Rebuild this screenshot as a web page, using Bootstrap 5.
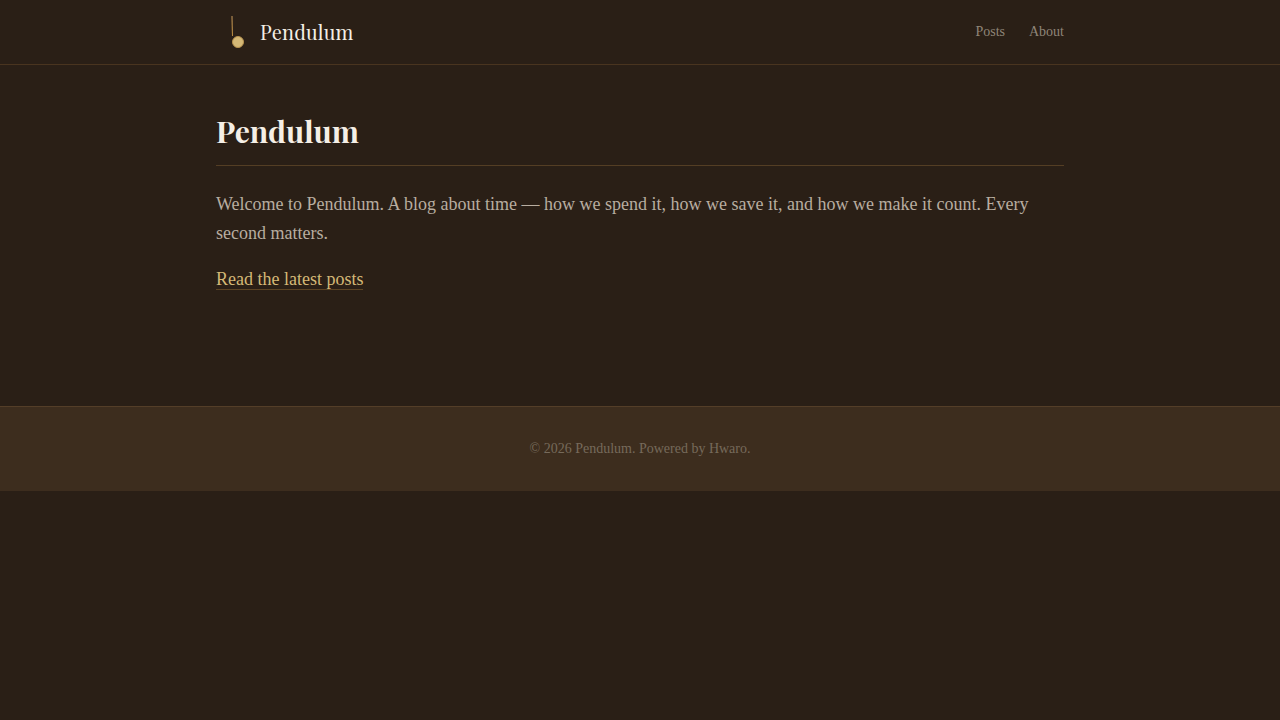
<!DOCTYPE html>
<html lang="en">
<head>
<meta charset="utf-8">
<meta name="viewport" content="width=device-width, initial-scale=1">
<title>Pendulum</title>
<link href="https://cdn.jsdelivr.net/npm/bootstrap@5.3.0/dist/css/bootstrap.min.css" rel="stylesheet">
<style>
  body {
    background: #2a1f16;
    color: #b8ada0;
    font-family: "Liberation Serif", serif;
    font-size: 18px;
    line-height: 29px;
  }
  .page-width { max-width: 880px; }
  .site-header { border-bottom: 1px solid #49341f; }
  .brand-name {
    color: #f5efe6;
    font-family: "Playfair Display", "Liberation Serif", serif;
    font-size: 20px;
    font-weight: 400;
    line-height: 32px;
    letter-spacing: 0.01em;
  }
  .site-nav { font-size: 14px; line-height: 20px; }
  .site-nav a { color: #8f8578; }
  .site-nav a:hover { color: #d4b876; }
  .page-title {
    color: #f5efe6;
    font-family: "Playfair Display", "Liberation Serif", serif;
    font-size: 30px;
    font-weight: 700;
    line-height: 36px;
    padding-bottom: 16px;
    border-bottom: 1px solid #543e24;
  }
  .intro { margin-bottom: 17px; }
  .posts-link {
    color: #d4b876;
    border-bottom: 1px solid #5c4424;
  }
  .site-footer {
    background: #3d2d1e;
    border-top: 1px solid #543e28;
    color: #766a5b;
    font-size: 14px;
    line-height: 20px;
    padding: 32px 0;
  }
</style>
</head>
<body>
<header class="site-header">
  <div class="container-fluid page-width px-3 py-3 d-flex justify-content-between align-items-center">
    <a href="#" class="d-flex align-items-center text-decoration-none">
      <svg class="me-2" width="36" height="32" viewBox="0 0 36 32" aria-hidden="true">
        <defs>
          <linearGradient id="rod" x1="0" y1="0" x2="0" y2="1">
            <stop offset="0" stop-color="#8b6b42"/>
            <stop offset="1" stop-color="#b8893f"/>
          </linearGradient>
        </defs>
        <path d="M15.2 0H16.8L17 20H16Z" fill="url(#rod)"/>
        <circle cx="22" cy="26" r="5.5" fill="#d4b876" stroke="#b8934f"/>
      </svg>
      <span class="brand-name">Pendulum</span>
    </a>
    <nav class="site-nav d-flex gap-4" aria-label="Main">
      <a href="#posts" class="text-decoration-none">Posts</a>
      <a href="#about" class="text-decoration-none">About</a>
    </nav>
  </div>
</header>
<main class="container-fluid page-width px-3 py-5">
  <h1 class="page-title mb-4">Pendulum</h1>
  <p class="intro">Welcome to Pendulum. A blog about time — how we spend it, how we save it, and how we make it count. Every second matters.</p>
  <p class="mb-3 pb-5"><a href="#posts" class="posts-link text-decoration-none">Read the latest posts</a></p>
</main>
<footer class="site-footer text-center">
  <p class="container-fluid page-width px-3 mb-0">© 2026 Pendulum. Powered by Hwaro.</p>
</footer>
<script src="https://cdn.jsdelivr.net/npm/bootstrap@5.3.0/dist/js/bootstrap.bundle.min.js"></script>
</body>
</html>
